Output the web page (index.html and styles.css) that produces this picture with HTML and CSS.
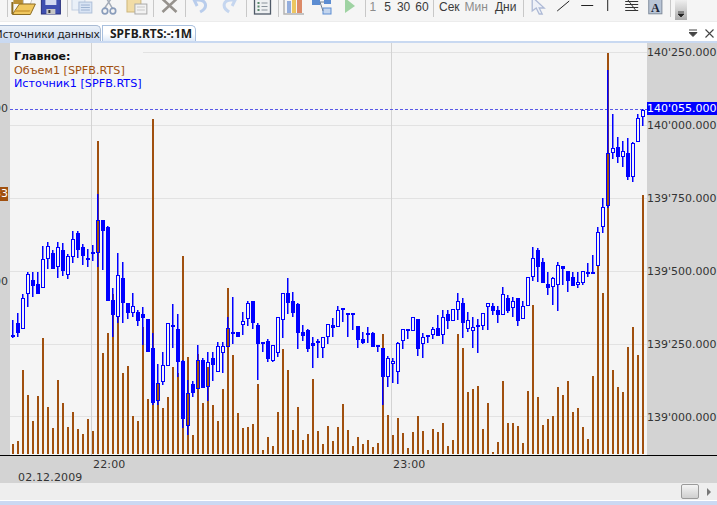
FILE: index.html
```html
<!DOCTYPE html>
<html lang="ru">
<head>
<meta charset="utf-8">
<title>SPFB.RTS:-:1M</title>
<link rel="stylesheet" href="styles.css">
</head>
<body>
<div class="app">
  <div class="toolbar">
    <div class="group g58">
      <div class="tool"><svg viewBox="8 0 29 22"><path d="M14 -2h15v6H14z" fill="#b98f35"/><path d="M24 -2h9l-2 6h-7z" fill="#fff" stroke="#c9c9c9"/><path d="M20 4h16l-5 10.500H13z" fill="#f0c75e" stroke="#8b6b22"/><path d="M13 2v12" stroke="#8b6b22" stroke-width="2"/><path d="M15 12h15l1-2H16z" fill="#d5a53e"/></svg></div>
      <div class="tool"><svg viewBox="37 0 29 22"><rect x="41" y="-3" width="19" height="17" fill="#3f4fb0" stroke="#28307a"/><rect x="45" y="-3" width="11" height="8" fill="#d3daf1"/><rect x="46" y="9" width="9" height="5" fill="#c6c6c6"/><rect x="48" y="10" width="2" height="3" fill="#333"/></svg></div>
    </div>
    <div class="group g86">
      <div class="tool"><svg viewBox="67 0 29 22"><rect x="72" y="-3" width="13" height="13" fill="#eaf0f8" stroke="#c4d0e2"/><rect x="79" y="2" width="13" height="11" fill="#d9e4f4" stroke="#aebfd8"/><path d="M81 5h9M81 7.500h9M81 10h9" stroke="#9db2d2"/></svg></div>
      <div class="tool"><svg viewBox="96 0 29 22"><path d="M105 9l7-10M114 9l-6-10" stroke="#a4acb8" stroke-width="1.500" fill="none"/><circle cx="106" cy="11" r="2.800" fill="none" stroke="#8a9dbb" stroke-width="1.700"/><circle cx="114" cy="11" r="2.800" fill="none" stroke="#8a9dbb" stroke-width="1.700"/></svg></div>
      <div class="tool"><svg viewBox="125 0 29 22"><rect x="128" y="-2" width="14" height="14" fill="#f1dca6" stroke="#cdb67c"/><rect x="136" y="4" width="12" height="10" fill="#f2f2f2" stroke="#a9a9a9"/><path d="M138 7h8M138 10h8" stroke="#c9c9c9"/></svg></div>
    </div>
    <div class="group g32">
      <div class="tool"><svg viewBox="154 0 31 22"><path d="M163 -1l14 13M177 -1L163 12" stroke="#96928d" stroke-width="2.600" fill="none"/></svg></div>
    </div>
    <div class="group g60">
      <div class="tool"><svg viewBox="186 0 30 22"><path d="M197 0c10 -1 13 7 4 12M201 0l-6 0l3 6" fill="none" stroke="#b9cdec" stroke-width="3"/></svg></div>
      <div class="tool"><svg viewBox="216 0 30 22"><path d="M234 0c-10 -1 -12 7 -4 12M230 0l6 0l-3 6" fill="none" stroke="#c5d6ef" stroke-width="3"/></svg></div>
    </div>
    <div class="group g32">
      <div class="tool"><svg viewBox="246 0 31 22"><rect x="254" y="-2" width="16" height="16" fill="#eef0f2" stroke="#4f5a68" stroke-width="1.300"/><path d="M257 3h2M257 6.500h2M257 10h2" stroke="#5a8a6c" stroke-width="2"/><path d="M261 3h6M261 6.500h6M261 10h6" stroke="#8a939c"/></svg></div>
    </div>
    <div class="group g87">
      <div class="tool"><svg viewBox="278 0 29 22"><path d="M284 -1v15h20" fill="none" stroke="#b3b3b3" stroke-width="1.500"/><rect x="287" y="1" width="4" height="12" fill="#94aedd"/><rect x="292" y="-1" width="4" height="14" fill="#ecc660"/><rect x="297" y="-1" width="5" height="14" fill="#dc8a68"/></svg></div>
      <div class="tool"><svg viewBox="307 0 29 22"><rect x="312" y="-2" width="8" height="7" fill="#5c8dd2"/><rect x="324" y="-2" width="7" height="6" fill="#5c8dd2"/><rect x="323" y="8" width="8" height="6" fill="#c3d5ee" stroke="#5c8dd2"/><path d="M320 2h4M320 2l3 9" stroke="#6f7f93" fill="none"/></svg></div>
      <div class="tool"><svg viewBox="336 0 29 22"><path d="M345 -2l10 8l-10 7z" fill="#9fd3a3"/></svg></div>
    </div>
    <div class="group g68 words">
      <span class="dim n1">1</span><span class="n5">5</span><span class="n30">30</span><span class="n60">60</span>
    </div>
    <div class="group g90 words">
      <span class="w1">Сек</span><span class="dim w2">Мин</span><span class="w3">Дни</span>
    </div>
    <div class="group g147">
      <div class="tool"><svg viewBox="523 0 24 22"><path d="M532 -3l12 11h-5l3 6h-3l-3-6l-4 3z" fill="#eef1f8" stroke="#aebad6" stroke-width="1.300"/></svg></div>
      <div class="tool"><svg viewBox="547 0 24 22"><path d="M557 11l12-10" stroke="#222"/></svg></div>
      <div class="tool"><svg viewBox="571 0 24 22"><path d="M580 5.500h12" stroke="#222"/></svg></div>
      <div class="tool"><svg viewBox="595 0 24 22"><path d="M606.500 -1v12" stroke="#222" stroke-width="1"/></svg></div>
      <div class="tool"><svg viewBox="619 0 24 22"><path d="M623 1.500h13M623 4.500h13M623 7.500h13M623 10.500h13M625 -1l9 12" stroke="#333" fill="none"/></svg></div>
      <div class="tool"><svg viewBox="643 0 26 22"><rect x="647" y="-2" width="14" height="16" fill="#b9c5d6" stroke="#7b8798"/><text x="649.500" y="12" class="glyph-a">A</text></svg></div>
    </div>
    <div class="group overflow">
      <div class="more"><svg viewBox="0 0 12 8" width="12" height="8"><path d="M3 1h6M3 3h6l-3 3z" fill="#222" stroke="#222" stroke-width="0.800"/></svg></div>
    </div>
  </div>

  <div class="tabs">
    <div class="tab tab-off"><span>Источники данных</span></div>
    <div class="tab tab-on">SPFB.RTS:-:1M</div>
    <div class="tab-tools">
      <svg viewBox="0 0 9 9" width="9" height="9"><path d="M0 1h8M0 3.500h8l-4 4z" fill="#444" stroke="#444"/></svg>
      <svg viewBox="0 0 9 9" width="9" height="9"><path d="M0.500 0.500l8 8M8.500 0.500l-8 8" stroke="#444" fill="none" stroke-width="1.100"/></svg>
    </div>
  </div>
  <div class="tabs-rule"></div>

  <div class="chart">
    <div class="left-axis">
      <span class="clip clip-a">140'000.000</span>
      <span class="clip clip-b">139'500.000</span>
      <span class="vol-badge">33</span>
    </div>
    <div class="plot">
      <svg id="plot" class="plot-svg" viewBox="10 43 637 412" width="637" height="412"></svg>
      <div class="legend">
        <div class="legend-title">Главное:</div>
        <div class="legend-vol">Объем1 [SPFB.RTS]</div>
        <div class="legend-src">Источник1 [SPFB.RTS]</div>
      </div>
    </div>
    <div class="right-axis">
      <span>140'250.000</span>
      <span>140'000.000</span>
      <span>139'750.000</span>
      <span>139'500.000</span>
      <span>139'250.000</span>
      <span>139'000.000</span>
      <div class="last-price">140'055.000</div>
    </div>
  </div>

  <div class="time-axis">
    <div class="times"><span>22:00</span><span>23:00</span></div>
    <div class="date">02.12.2009</div>
  </div>
  <div class="status">
    <div class="thumb"></div>
    <div class="arrow"></div>
  </div>
  <div class="bottom-rule"></div>
</div>
<script src="chart.js"></script>
</body>
</html>
```
FILE: styles.css
```css
* { box-sizing: border-box; }
html, body { margin: 0; padding: 0; background: #fff; }
.app { width: 717px; height: 505px; overflow: hidden; display: flex; flex-direction: column; background: #fff; }

.toolbar { flex: none; height: 22px; padding-left: 7px; display: flex; background: #f5f5f5; border-bottom: 1px solid #ececec; overflow: hidden; }
.group { flex: none; height: 21px; display: flex; position: relative; }
.group::before { content: ""; position: absolute; left: 0; top: 0; width: 1px; height: 17px; background: #c8c8c8; }
.g58 { width: 59.5px; }
.g86 { width: 86.5px; }
.g32 { width: 32px; }
.g60 { width: 60.5px; }
.g87 { width: 87px; }
.g68 { width: 68.5px; }
.g90 { width: 90px; }
.g147 { width: 146.5px; }
.overflow { width: 17px; padding-left: 5px; }
.tool { flex: 1; height: 21px; min-width: 0; }
.tool svg { display: block; width: 100%; height: 22px; }
.glyph-a { font: bold 13px "Liberation Serif", serif; fill: #1c2636; }
.more { width: 12px; height: 20px; background: linear-gradient(#efefef, #ababab); display: flex; align-items: flex-end; padding-bottom: 1px; }
.more svg { display: block; }
.words { font: 12px/14px "Liberation Sans", sans-serif; color: #3a3a3a; }
.words span { display: block; }
.dim { color: #8c8c8c; }
.n1 { margin-left: 5px; }
.n5 { margin-left: 8px; }
.n30 { margin-left: 6px; }
.n60 { margin-left: 5px; }
.w1 { margin-left: 6px; }
.w2 { margin-left: 5px; }
.w3 { margin-left: 7px; }

.tabs { flex: none; height: 19px; padding-top: 3px; display: flex; align-items: stretch; background: #fff; }
.tab { font: 12px/16px "Noto Sans", sans-serif; color: #1c1c1c; white-space: nowrap; overflow: hidden; }
.tab-off { width: 101px; font-size: 11.500px; background: linear-gradient(#eaf0f8, #c9d9f0); border: 1px solid #a9bbd4; border-left: 0; border-bottom: 0; border-top-right-radius: 5px; margin-right: 1px; }
.tab-off span { display: block; margin-left: -6px; }
.tab-on { width: 94px; font-weight: 700; padding-left: 7px; background: linear-gradient(#fff 50%, #dfeaf8); border: 1px solid #a9c0de; border-bottom: 0; border-top-right-radius: 5px; }
.tab-tools { margin-left: auto; padding-right: 3px; display: flex; align-items: center; gap: 7px; }
.tab-tools svg { display: block; }
.tabs-rule { flex: none; height: 2px; background: #c9d9f1; }

.chart { flex: none; height: 412px; display: flex; }
.left-axis { flex: none; width: 10px; position: relative; overflow: hidden; background: #d3d3d3; font: 11px/13px "DejaVu Sans", sans-serif; color: #333; }
.clip { position: absolute; right: 2px; white-space: nowrap; }
.clip-a { top: 59px; }
.clip-b { top: 232px; }
.vol-badge { position: absolute; left: -8px; top: 144px; width: 16px; height: 14px; background: #a0500f; color: #fff; text-align: right; }
.plot { flex: none; width: 637px; position: relative; background: #f5f5f5; }
.plot-svg { display: block; }
.legend { position: absolute; left: 4px; top: 7px; font: 11.200px/13.500px "DejaVu Sans", sans-serif; }
.legend-title { font-weight: 700; color: #111; font-size: 11px; }
.legend-vol { color: #a0500f; }
.legend-src { color: #0000ff; }
.right-axis { flex: 1; position: relative; padding: 3px 0 0 0; display: flex; flex-direction: column; gap: 59px; background: #d3d3d3; font: 11px/14px "DejaVu Sans", sans-serif; color: #333; white-space: nowrap; }
.right-axis span { display: block; height: 14px; }
.last-price { position: absolute; left: 0; right: 0; top: 59px; height: 13px; line-height: 14px; background: #0000ff; color: #fff; }

.time-axis { flex: none; height: 28px; background: #d3d3d3; border-top: 1px solid #000; font: 11px/13px "DejaVu Sans", sans-serif; color: #333; letter-spacing: 0.150px; }
.times { display: flex; padding: 2px 0 0 93px; }
.times span { width: 300px; }
.date { padding-left: 18px; }

.status { flex: none; height: 17px; padding: 1px 6px 0 0; display: flex; justify-content: flex-end; align-items: flex-start; gap: 8px; background: #eee; }
.thumb { width: 18px; height: 15px; border: 1px solid #9a9a9a; border-radius: 2px; background: linear-gradient(#f4f4f4, #cfcfcf); }
.arrow { width: 0; height: 0; margin-top: 4px; border-left: 4px solid #777; border-top: 4px solid transparent; border-bottom: 4px solid transparent; }
.bottom-rule { flex: none; height: 4px; margin-top: 1px; background: #cbd9f3; }
```
FILE: chart.js
```js
// Volume bars: top y of each bar, first bar at x=12, 5 px apart.
var bars = [444,441,370,395,421,396,338,407,428,380,403,427,412,429,434,419,431,141,353,333,294,317,373,366,416,421,327,399,119,383,408,397,367,373,256,357,435,354,403,367,405,421,389,288,355,413,
428,427,424,384,450,437,446,412,349,370,430,407,440,434,379,431,444,426,441,427,404,430,446,437,444,440,447,443,334,415,435,418,433,448,432,416,431,450,429,432,423,446,440,334,348,392,389,386,
429,403,452,442,381,423,423,426,443,391,305,397,425,419,416,387,395,381,412,408,427,439,376,266,293,53,370,387,392,347,327,355,195];

// Candles: [wick top, body top, body bottom, wick bottom, hollow], first centred on x=13.
var candles = [
[320,335,337,338,0],[313,323,333,337,0],[294,298,329,329,1],[272,274,294,307,1],[272,280,286,297,0],[272,284,294,294,0],[246,259,288,288,1],[242,246,259,269,1],[250,253,269,269,0],[242,247,267,278,1],
[243,250,271,276,0],[254,256,275,279,1],[231,239,257,263,1],[231,233,250,258,0],[244,247,256,265,0],[249,258,260,267,0],[245,252,253,261,0],[194,220,253,267,1],[220,220,231,270,0],[226,227,301,301,0],
[288,300,315,337,0],[253,275,317,323,1],[262,278,303,323,0],[303,303,313,319,0],[293,306,313,317,1],[310,312,321,326,0],[307,314,318,345,0],[319,319,352,352,0],[333,348,403,405,0],[364,383,401,405,1],
[352,365,382,385,1],[323,323,366,366,1],[304,325,326,348,0],[314,329,362,377,0],[360,361,419,428,0],[380,393,426,435,1],[381,384,393,397,0],[345,360,389,389,1],[358,360,388,388,0],[352,362,387,401,1],
[352,358,365,381,0],[342,346,372,372,1],[342,346,353,373,1],[317,328,347,347,1],[297,332,333,344,0],[332,332,337,337,0],
[312,321,325,335,1],[301,303,319,326,1],[301,301,323,329,0],[323,325,344,380,0],[342,342,344,352,1],[339,341,359,362,0],[345,345,361,362,1],[317,317,353,357,1],[293,293,320,338,1],[278,293,303,314,0],
[292,301,313,317,0],[303,304,333,349,0],[325,332,336,341,0],[329,330,349,352,0],[337,343,346,368,0],[339,341,342,358,0],[337,337,348,358,1],[324,324,337,344,1],[318,325,328,337,0],[306,310,327,327,1],
[308,308,309,322,1],[313,313,314,337,1],[313,313,315,330,0],[326,326,340,348,0],[332,339,343,344,0],[327,333,334,343,0],[332,333,347,347,0],[345,345,347,352,0],[348,348,377,405,0],[356,358,377,387,1],
[358,361,364,383,1],[342,343,372,384,1],[329,329,341,349,1],[329,329,331,339,0],[317,317,331,331,1],[319,319,349,356,0],[333,337,344,358,1],[335,335,337,343,0],[327,329,335,339,1],[315,328,336,336,0],
[310,317,335,344,1],[310,314,321,329,0],[309,309,321,321,1],[293,301,310,320,1],[298,303,323,338,0],[312,320,329,332,1],[317,327,331,348,1],[319,325,327,353,0],
[313,313,326,330,1],[303,303,307,330,1],[303,306,311,315,0],[306,310,315,323,0],[287,294,315,315,1],[295,298,311,313,0],[297,301,308,317,1],[298,298,321,326,0],[301,306,319,319,1],[277,277,306,306,1],
[247,258,277,281,1],[248,250,267,282,0],[258,262,283,283,0],[272,284,288,295,0],[277,278,287,305,1],[262,265,285,311,1],[266,266,269,285,0],[271,271,281,292,0],[272,277,286,286,0],[272,282,285,288,1],
[271,271,283,285,1],[263,272,273,277,0],[255,272,274,274,1],[227,232,266,266,1],[198,207,227,233,1],[70,153,206,208,1],[114,148,153,159,1],[137,147,157,163,0],[141,151,157,167,1],[138,153,177,180,0],
[142,143,177,182,1],[114,118,142,142,1],[109,110,117,126,1]];

var NS = "http://www.w3.org/2000/svg";
var svg = document.getElementById("plot");
function add(tag, attrs) {
  var el = document.createElementNS(NS, tag);
  for (var k in attrs) el.setAttribute(k, attrs[k]);
  svg.appendChild(el);
}
[125, 198, 271, 344, 416].forEach(function (y) {
  add("rect", { x: 10, y: y, width: 637, height: 1, fill: "#e2e2e2" });
});
add("rect", { x: 143, y: 52, width: 504, height: 1, fill: "#e2e2e2" });
[91, 391].forEach(function (x) {
  add("rect", { x: x, y: 43, width: 1, height: 412, fill: "#d3d3d3" });
});
add("line", { x1: 10, x2: 647, y1: 109.5, y2: 109.5, stroke: "#5a5ae6", "stroke-width": 1, "stroke-dasharray": "3 2" });
bars.forEach(function (top, i) {
  add("rect", { x: 12 + 5 * i, y: top, width: 2, height: 454 - top, fill: "#a0500f" });
});
candles.forEach(function (c, i) {
  var x = 13 + 5 * i;
  var h = Math.max(c[2] - c[1], 2);
  if (c[4]) {
    // Hollow candle: the wick stops at the body so the bar shows through it.
    add("rect", { x: x - 1, y: c[0], width: 1.5, height: c[1] - c[0], fill: "#0000ff" });
    add("rect", { x: x - 1, y: c[1] + h, width: 1.5, height: Math.max(c[3] - c[1] - h, 0), fill: "#0000ff" });
    add("rect", { x: x - 1.5, y: c[1] + 0.5, width: 3, height: h - 1, fill: "none", stroke: "#0000ff", "stroke-width": 1 });
  } else {
    add("rect", { x: x - 1, y: c[0], width: 1.5, height: c[3] - c[0], fill: "#0000ff" });
    add("rect", { x: x - 2, y: c[1], width: 4, height: h, fill: "#0000ff" });
  }
});
```
